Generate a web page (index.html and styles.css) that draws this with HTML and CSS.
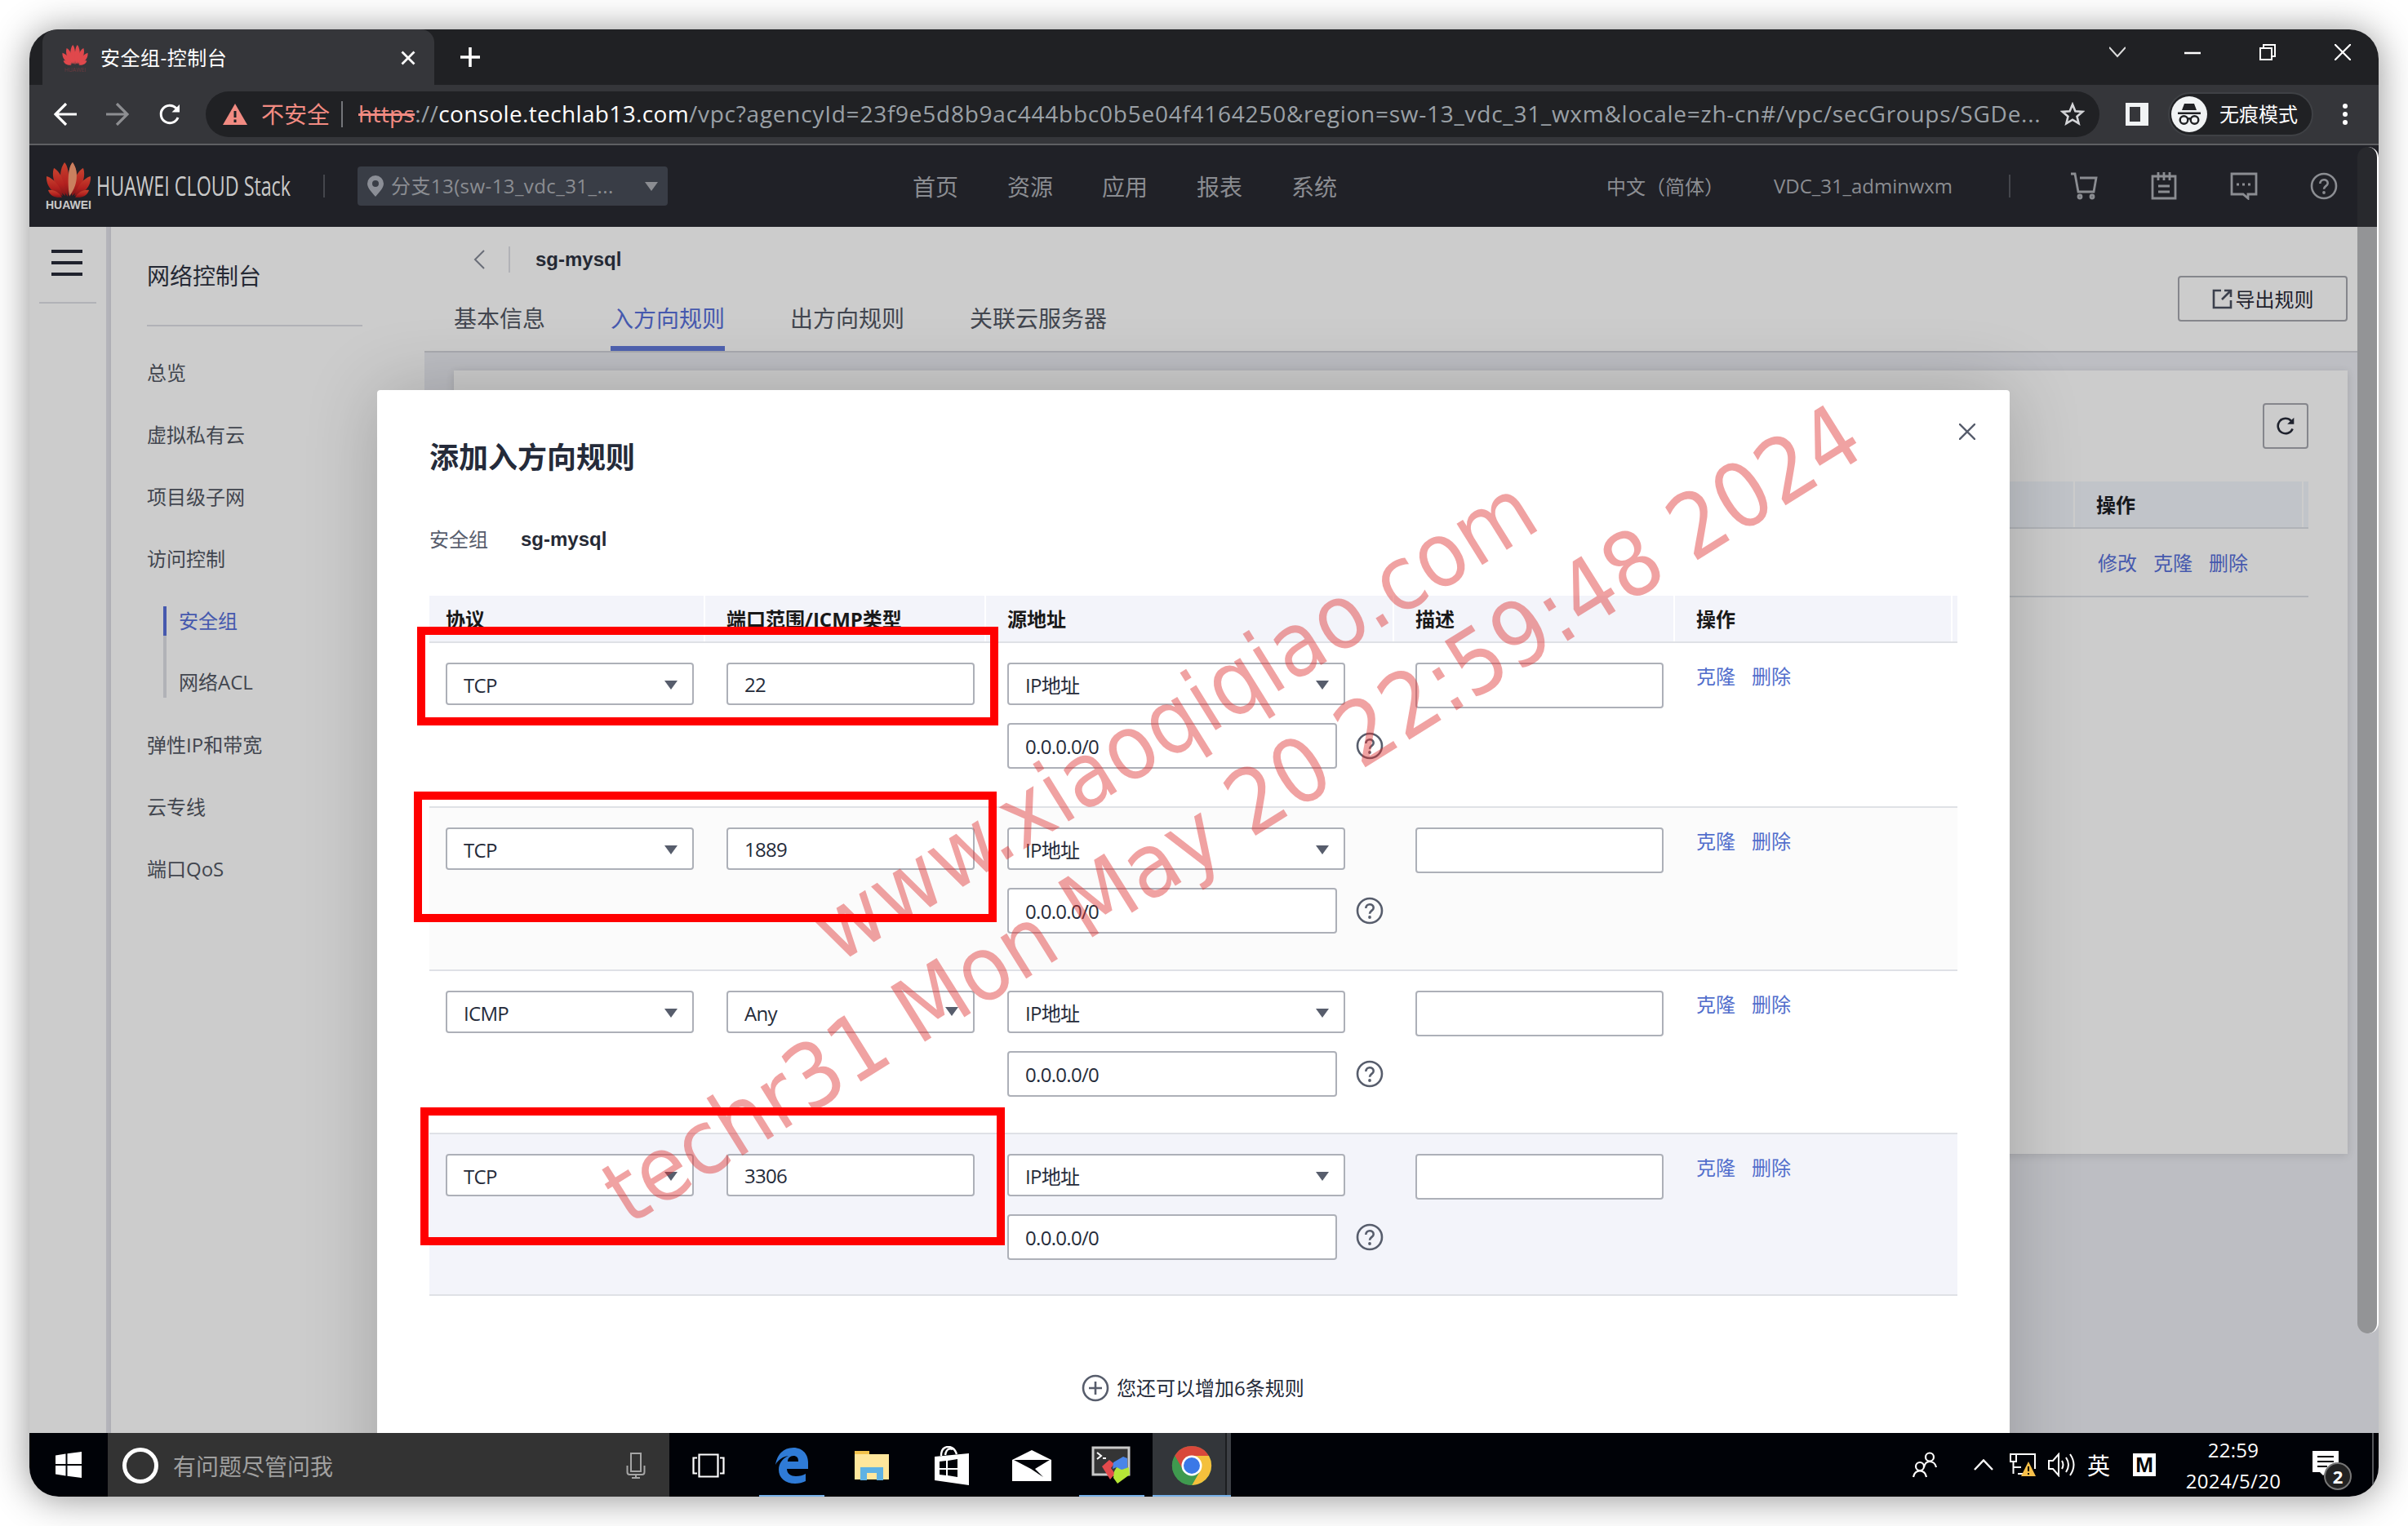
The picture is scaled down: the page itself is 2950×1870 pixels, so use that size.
FILE: index.html
```html
<!DOCTYPE html>
<html lang="zh-CN">
<head>
<meta charset="utf-8">
<title>安全组-控制台</title>
<link rel="stylesheet" href="styles.css">
</head>
<body>
<svg class="defs" width="0" height="0">
  <symbol id="petals" viewBox="0 0 56 44">
    <path d="M27 43C17 30 15 12 23 1c5 4 7 22 4 42z"/><path d="M29 43C39 30 41 12 33 1c-5 4-7 22-4 42z"/>
    <path d="M24 42C13 34 6 20 10 8c8 4 14 18 14 34z"/><path d="M32 42C43 34 50 20 46 8c-8 4-14 18-14 34z"/>
    <path d="M21 42C10 40 0 31 1 18c8 2 17 12 20 24z"/><path d="M35 42C46 40 56 31 55 18c-8 2-17 12-20 24z"/>
    <path d="M20 44C12 45 5 42 3 35c7-1 14 3 17 9z"/><path d="M36 44C44 45 51 42 53 35c-7-1-14 3-17 9z"/>
  </symbol>
  <symbol id="help" viewBox="0 0 34 34"><g fill="none" stroke="currentColor" stroke-width="2.6"><circle cx="17" cy="17" r="15"/><path d="M12.3 14c0-6.200 9.400-6.200 9.400-.6 0 3.400-4.700 3.600-4.700 7.400"/></g><circle cx="17" cy="25" r="1.900" fill="currentColor"/></symbol>
  <symbol id="reload" viewBox="0 0 28 28"><path d="M24 18A10.800 10.800 0 1 1 21.800 6.500L24 9" fill="none" stroke="currentColor" stroke-width="3"/><path d="M26 2V11.500H16.500z" fill="currentColor"/></symbol>
</svg>
<div class="window">
  <div class="tabstrip">
    <div class="tab">
      <svg class="favicon" viewBox="0 0 56 66"><use href="#petals" width="56" height="52" fill="#e0484c"/><text x="28" y="62" font-size="12" text-anchor="middle" fill="#6b3a40">HUAWEI</text></svg>
      <span>安全组-控制台</span>
      <svg class="tab-x" viewBox="0 0 18 18"><path d="M1.500 1.500l15 15m0-15l-15 15" stroke="#fff" stroke-width="2.800"/></svg>
    </div>
    <svg class="plus" viewBox="0 0 24 24"><path d="M12 0v24M0 12h24" stroke="#fff" stroke-width="3.600"/></svg>
    <div class="winctl">
      <svg viewBox="0 0 20 20"><path d="M0 4l10 11L20 4" fill="none" stroke="#ddd" stroke-width="2"/></svg>
      <svg viewBox="0 0 20 20"><path d="M0 11h20" stroke="#fff" stroke-width="2.400"/></svg>
      <svg viewBox="0 0 20 20"><path d="M1 5h14v14H1zM5 5V1h14v14h-4" fill="none" stroke="#fff" stroke-width="2"/></svg>
      <svg viewBox="0 0 20 20"><path d="M0 0l20 20M20 0L0 20" stroke="#fff" stroke-width="2.200"/></svg>
    </div>
  </div>
  <div class="toolbar">
    <svg class="nav-i" viewBox="0 0 28 28"><path d="M28 14H2M15 1L2 14l13 13" fill="none" stroke="#fff" stroke-width="3.200"/></svg>
    <svg class="nav-i dim" viewBox="0 0 28 28"><path d="M0 14h26M13 1l13 13-13 13" fill="none" stroke="#8d8e91" stroke-width="3.200"/></svg>
    <svg class="nav-i white"><use href="#reload"/></svg>
    <div class="omnibox">
      <svg class="warn" viewBox="0 0 30 26"><path d="M15 0l15 26H0z" fill="#f28b82"/><path d="M15 9v8m0 2.500v3.500" stroke="#202124" stroke-width="3"/></svg>
      <span class="unsafe">不安全</span><i class="osep"></i>
      <span class="url"><span class="scheme">https</span><span class="sl">://</span><b>console.techlab13.com</b><span class="path">/vpc?agencyId=23f9e5d8b9ac444bbc0b5e04f4164250&amp;region=sw-13_vdc_31_wxm&amp;locale=zh-cn#/vpc/secGroups/SGDe...</span></span>
      <svg class="star" viewBox="0 0 30 30"><path d="M15 3l3.400 8.200 8.800.7-6.700 5.800 2.100 8.600L15 21.700l-7.600 4.600 2.100-8.600-6.700-5.800 8.800-.7z" fill="none" stroke="#d5d6d9" stroke-width="2.600"/></svg>
    </div>
    <svg class="panel" viewBox="0 0 28 28"><path d="M2.500 2.500h23v23h-23z" fill="none" stroke="#f1f3f4" stroke-width="5"/><path d="M18 2h8v24h-8z" fill="#f1f3f4"/></svg>
    <div class="incog">
      <svg viewBox="0 0 44 44"><circle cx="22" cy="22" r="22" fill="#f1f3f4"/><path d="M13 17l3-8h12l3 8zM8 19.500h28v2.500H8z" fill="#202124"/><g fill="none" stroke="#202124" stroke-width="2.400"><circle cx="15.500" cy="29" r="4.800"/><circle cx="28.500" cy="29" r="4.800"/><path d="M20 28q2-1.500 4 0"/></g></svg>
      <span>无痕模式</span>
    </div>
    <svg class="dots" viewBox="0 0 6 28"><circle cx="3" cy="4" r="3"/><circle cx="3" cy="14" r="3"/><circle cx="3" cy="24" r="3"/></svg>
  </div>

  <header class="top">
    <svg class="logo" viewBox="0 0 310 70">
      <defs><linearGradient id="lg" x1="0" y1="0" x2="0" y2="1"><stop offset="0" stop-color="#c8432f"/><stop offset=".6" stop-color="#b3211f"/><stop offset="1" stop-color="#7d1518"/></linearGradient></defs>
      <use href="#petals" y="5" width="56" height="44" fill="url(#lg)"/><path d="M29 47C39 35 41 17 33 6c-5 4-7 22-4 41z" fill="#c9805f"/>
      <text x="0" y="63" class="hw" textLength="56" lengthAdjust="spacingAndGlyphs">HUAWEI</text>
      <text x="62" y="47" class="stack" textLength="238" lengthAdjust="spacingAndGlyphs">HUAWEI CLOUD Stack</text>
    </svg>
    <i class="hsep"></i>
    <div class="region"><svg viewBox="0 0 20 26"><path d="M10 0a10 10 0 0 1 10 10c0 6-7 12-10 16C7 22 0 16 0 10A10 10 0 0 1 10 0zm0 6a4 4 0 1 0 0 8 4 4 0 0 0 0-8z" fill="#8b8e96" fill-rule="evenodd"/></svg><span>分支13(sw-13_vdc_31_...</span><i class="tri"></i></div>
    <nav><a>首页</a><a>资源</a><a>应用</a><a>报表</a><a>系统</a></nav>
    <span class="lang">中文（简体）</span><span class="user">VDC_31_adminwxm</span>
    <i class="hsep h2"></i>
    <div class="hicons">
      <svg viewBox="0 0 34 34"><path d="M1 2h5l4 22h19l3-17H12" /><circle cx="12" cy="30" r="2"/><circle cx="27" cy="30" r="2"/></svg>
      <svg viewBox="0 0 34 34"><path d="M3 5h28v27H3zM10 0v10M17 0v10M24 0v10M10 17h14M10 24h14"/></svg>
      <svg viewBox="0 0 34 34"><path d="M2 2h30v25H22v5l-6-5H2z"/><path d="M8 15h3m4 0h3m4 0h3" stroke-width="3.200"/></svg>
      <svg viewBox="0 0 34 34"><use href="#help"/></svg>
    </div>
  </header>

  <div class="page">
    <aside class="rail"><div class="burger"><i></i><i></i><i></i></div><hr></aside>
    <aside class="side">
      <h2>网络控制台</h2><hr>
      <a>总览</a><a>虚拟私有云</a><a>项目级子网</a><a>访问控制</a>
      <div class="sub"><a class="on">安全组</a><a class="acl">网络ACL</a></div>
      <a>弹性IP和带宽</a><a>云专线</a><a>端口QoS</a>
    </aside>
    <main>
      <div class="mhead">
        <div class="mtitle">
          <div class="crumb"><svg viewBox="0 0 14 24"><path d="M13 1L2 12l11 11" fill="none" stroke="#6a6e78" stroke-width="2"/></svg><i></i><b>sg-mysql</b></div>
          <div class="tabs"><a>基本信息</a><a class="on">入方向规则</a><a>出方向规则</a><a>关联云服务器</a></div>
        </div>
        <button class="export"><svg viewBox="0 0 26 26"><path d="M11 2H2v21h21v-9M15 2h8v8M23 2L12 13" fill="none" stroke="#3b404d" stroke-width="2.600"/></svg>导出规则</button>
      </div>
      <div class="card">
        <button class="refresh"><svg><use href="#reload"/></svg></button>
        <div class="brow bhead"><span class="c1"></span><span class="c2">操作</span><span class="c3"></span></div>
        <div class="brow"><span class="c1"></span><span class="acts"><a>修改</a><a>克隆</a><a>删除</a></span></div>
      </div>
    </main>
    <section class="dialog">
      <div class="dhead"><h1>添加入方向规则</h1><svg viewBox="0 0 20 20"><path d="M0 0l20 20M20 0L0 20" stroke="#575d6c" stroke-width="2.400"/></svg></div>
      <div class="sg"><span>安全组</span><b>sg-mysql</b></div>
      <div class="grid">
        <div class="row th"><span>协议</span><span>端口范围/ICMP类型</span><span>源地址</span><span>描述</span><span>操作</span><span></span></div>
        <div class="row tr first"><div class="sel">TCP<i class="tri"></i></div><div class="inp">22</div><div class="src"><div class="sel">IP地址<i class="tri"></i></div><div class="ip"><div class="inp">0.0.0.0/0</div><svg><use href="#help"/></svg></div></div><div class="inp tall"></div><div class="acts"><a>克隆</a><a>删除</a></div></div>
        <div class="row tr alt"><div class="sel">TCP<i class="tri"></i></div><div class="inp">1889</div><div class="src"><div class="sel">IP地址<i class="tri"></i></div><div class="ip"><div class="inp">0.0.0.0/0</div><svg><use href="#help"/></svg></div></div><div class="inp tall"></div><div class="acts"><a>克隆</a><a>删除</a></div></div>
        <div class="row tr"><div class="sel">ICMP<i class="tri"></i></div><div class="sel any">Any<i class="tri"></i></div><div class="src"><div class="sel">IP地址<i class="tri"></i></div><div class="ip"><div class="inp">0.0.0.0/0</div><svg><use href="#help"/></svg></div></div><div class="inp tall"></div><div class="acts"><a>克隆</a><a>删除</a></div></div>
        <div class="row tr hover"><div class="sel">TCP<i class="tri"></i></div><div class="inp">3306</div><div class="src"><div class="sel">IP地址<i class="tri"></i></div><div class="ip"><div class="inp">0.0.0.0/0</div><svg><use href="#help"/></svg></div></div><div class="inp tall"></div><div class="acts"><a>克隆</a><a>删除</a></div></div>
      </div>
      <div class="add"><svg viewBox="0 0 34 34"><g fill="none" stroke="#575d6c" stroke-width="2.600"><circle cx="17" cy="17" r="15"/><path d="M17 9v16M9 17h16"/></g></svg><span>您还可以增加6条规则</span></div>
    </section>
  </div>

  <footer class="taskbar">
    <div class="start"><svg viewBox="0 0 32 32"><path d="M0 4.500L12.500 2.500V15H0zM14.500 2.200L32 0v15H14.500zM0 17h12.500v12.500L0 27.500zM14.500 17H32v15l-17.500-2.200z" fill="#fff"/></svg></div>
    <div class="search"><i class="cortana"></i><span>有问题尽管问我</span><svg viewBox="0 0 24 32"><path d="M6 1h12v22H6zM1.500 16v8q0 3 3 3h15q3 0 3-3v-8M12 27v4M7 31h10" fill="none" stroke="#a5a5a5" stroke-width="2"/></svg></div>
    <div class="slot tv"><svg width="40" height="30" viewBox="0 0 40 30"><path d="M8.500 1.500h23v27h-23zM6 5.500H1.500v19H6M34 5.500h4.500v19H34" fill="none" stroke="#fff" stroke-width="2.200"/></svg></div>
    <div class="slot run"><svg width="42" height="44" viewBox="0 0 42 44"><path d="M1 21C3 8 11 0 23 0c11 0 18 8 18 18v8H15c0 6 5 9 11 9 5 0 9-1 12-3v9c-4 2-8 3-13 3C13 44 5 37 5 27c0-8 5-14 12-17C10 11 4 15 1 21zm15-4h13c0-5-2-7-6-7s-7 3-7 7z" fill="#2f7bd6"/></svg></div>
    <div class="slot"><svg width="44" height="38" viewBox="0 0 44 38"><path d="M1 1h18v4h24v31H1z" fill="#ffe79c"/><path d="M1 1h18v4H1z" fill="#f3c34c"/><path d="M8 37V21h28v16h-8v-9H16v9z" fill="#5eb2e4"/></svg></div>
    <div class="slot"><svg width="42" height="48" viewBox="0 0 42 48"><path d="M0 13l42-4v39L0 42z" fill="#fff"/><path d="M8 12C8 4 12 1 17 1s8 3 10 9M13 11c1-7 5-9 9-7" fill="none" stroke="#fff" stroke-width="2.400"/><path d="M6 19l8-1v9H6zm10-1l12-2v11H16zM6 29h8v7l-8-1zm10 0h12v9l-12-2z" fill="#000207"/></svg></div>
    <div class="slot"><svg width="48" height="38" viewBox="0 0 48 38"><path d="M0 12L24 0l24 12v26H0z" fill="#fff"/><path d="M2 12h44L28 23l10 10-15-10z" fill="#000207"/></svg></div>
    <div class="slot run"><svg width="50" height="48" viewBox="0 0 50 48"><path d="M2 2h44v33H2z" fill="#353535" stroke="#c9c9c9" stroke-width="3"/><path d="M7 8l5 4-5 4M14 15h4" fill="none" stroke="#fff" stroke-width="2"/><path d="M13 25l9-8 6 5-4 5 5 7-6 7z" fill="#e44a4c"/><path d="M27 20l12-7 5 2v12l-9 3-4-4-5 2z" fill="#4a85e8"/><path d="M28 31l3-5 6 3 9-3 1 9-15 11-5-7z" fill="#b5e636"/></svg></div>
    <div class="slot chrome"><svg width="50" height="50" viewBox="0 0 50 50"><circle cx="25" cy="25" r="24" fill="#3f9a4f"/><path d="M25 13h21A24 24 0 0 1 25 49l10.400-18z" fill="#f4c03c"/><path d="M4.200 13a24 24 0 0 1 41.600 0H25a12 12 0 0 0-10.400 18z" fill="#d9483b"/><path d="M4.200 13A24 24 0 0 0 25 49l10.400-18a12 12 0 0 1-20.800 0z" fill="#3f9a4f"/><circle cx="25" cy="25" r="12.500" fill="#fff"/><circle cx="25" cy="25" r="10" fill="#3b78e7"/></svg></div>
    <div class="tray">
      <svg width="30" height="32" viewBox="0 0 30 32"><g fill="none" stroke="#fff" stroke-width="2.200"><circle cx="21" cy="6.500" r="5"/><path d="M14 19c1-5 4-7 7-7s7 2 8 7"/><circle cx="9" cy="18" r="5"/><path d="M1 31c1-5 4-7.500 8-7.500s7 2.500 8 7.500"/></g></svg>
      <svg class="up" width="24" height="14" viewBox="0 0 24 14"><path d="M1 13L12 1.500 23 13" fill="none" stroke="#fff" stroke-width="2.400"/></svg>
      <svg class="net" width="32" height="30" viewBox="0 0 32 30"><path d="M9 2h22v18M1 2h7v9H1zM4.500 11v15M4 18h10M10 26h8" fill="none" stroke="#fff" stroke-width="2"/><path d="M23 11l9 18H14z" fill="#f7c04a"/><path d="M23 17v6m0 2v2" stroke="#000" stroke-width="2"/></svg>
      <svg class="vol" width="34" height="30" viewBox="0 0 34 30"><path d="M1 10h5l7-8v26l-7-8H1zM17 10q3 5 0 10M22 6q6 9 0 18M27 2q9 13 0 26" fill="none" stroke="#fff" stroke-width="2"/></svg>
      <span class="ime">英</span><span class="m">M</span>
      <div class="clock"><span>22:59</span><span>2024/5/20</span></div>
      <div class="note"><svg width="32" height="30" viewBox="0 0 32 30"><path d="M0 0h32v26H18l-5 4-4-4H0z" fill="#fff"/><path d="M6 7h20M6 13h20M6 19h12" stroke="#000" stroke-width="2"/></svg><span>2</span></div>
      <i class="desk"></i>
    </div>
  </footer>
  <i class="thumb"></i>
</div>
<svg class="marks" width="2950" height="1870">
  <g class="wm">
    <text transform="translate(1026 1182) rotate(-31.800)" textLength="1017" lengthAdjust="spacingAndGlyphs">www.xiaoqiqiao.com</text>
    <text transform="translate(770 1503) rotate(-31.950)" textLength="1790" lengthAdjust="spacingAndGlyphs">techr31 Mon May 20 22:59:48 2024</text>
  </g>
  <g fill="none" stroke="#f00" stroke-width="10"><rect x="516" y="773" width="702" height="111"/><rect x="512" y="975" width="704" height="150"/><rect x="520" y="1362" width="706" height="159"/></g>
</svg>
</body>
</html>
```
FILE: styles.css
```css
* { box-sizing: border-box; margin: 0; padding: 0; }
body { width: 2950px; height: 1870px; overflow: hidden; background: #fff; padding: 36px; position: relative;
  font-family: "Open Sans", "Noto Sans CJK SC", sans-serif; font-size: 24px; line-height: 36px; color: #252b3a; }
svg { display: block; flex: none; }
i { display: block; flex: none; }
hr { border: 0; height: 2px; background: #b1b2b7; }
.defs { position: absolute; }
.window { position: relative; width: 2878px; height: 1798px; border-radius: 36px; overflow: hidden; display: flex; flex-direction: column; }
body::before { content: ""; position: absolute; left: 36px; top: 36px; width: 2878px; height: 1798px; border-radius: 36px; box-shadow: 0 2px 46px rgba(0,0,0,.44); }

/* browser chrome */
.tabstrip { height: 68px; background: #202124; display: flex; align-items: center; padding-left: 16px; }
.tab { width: 480px; height: 68px; background: #35363a; border-radius: 16px 16px 0 0; display: flex; align-items: center; padding: 2px 23px 0 23px; color: #fff; }
.tab span { margin-left: 14px; flex: 1; letter-spacing: .5px; }
.favicon { width: 34px; height: 38px; }
.tab-x { width: 18px; height: 18px; }
.plus { width: 24px; height: 24px; margin-left: 32px; }
.winctl { margin-left: auto; display: flex; gap: 72px; padding: 0 34px 12px 0; }
.winctl svg { width: 20px; height: 20px; }
.toolbar { height: 74px; background: #35363a; border-bottom: 2px solid #5f6063; display: flex; align-items: center; padding-left: 30px; }
.nav-i { width: 28px; height: 28px; margin-right: 36px; }
.white { color: #fff; margin-right: 30px; }
.omnibox { width: 2320px; height: 56px; border-radius: 28px; background: #202124; display: flex; align-items: center; padding-left: 21px; font-size: 28px; line-height: 54px; color: #9aa0a6; white-space: nowrap; }
.warn { width: 30px; height: 26px; }
.unsafe { color: #f28b82; margin-left: 17px; }
.osep { width: 2px; height: 32px; background: #74767a; margin: 0 19px 0 14px; }
.url { width: 2060px; height: 56px; display: flex; }
.scheme { color: #f28b82; text-decoration: line-through; text-decoration-thickness: 3px; letter-spacing: .3px; }
.sl { letter-spacing: .4px; }
.url b { color: #fff; font-weight: 400; letter-spacing: .35px; }
.path { letter-spacing: .75px; }
.star { width: 30px; height: 30px; margin-left: 25px; }
.panel { width: 28px; height: 28px; margin-left: 32px; }
.incog { width: 178px; height: 54px; margin-left: 24px; border: 2px solid #3f4145; border-radius: 27px; background: #202124; display: flex; align-items: center; gap: 15px; color: #fff; padding-left: 2px; }
.incog svg { width: 44px; height: 44px; }
.dots { width: 6px; height: 28px; margin-left: 36px; fill: #fff; }

/* console header */
.top { height: 100px; background: #202127; display: flex; align-items: center; color: #8b8d92; padding-left: 20px; white-space: nowrap; }
.logo { width: 310px; height: 70px; margin-right: -10px; overflow: visible; }
.hw { font: 700 15px "Liberation Sans", sans-serif; fill: #c9c9c9; }
.stack { font-size: 32px; fill: #c9c9c9; }
.hsep { width: 2px; height: 28px; background: #44464c; margin: 0 40px 0 40px; }
.region { width: 380px; height: 48px; background: #393d46; border-radius: 4px; display: flex; align-items: center; padding: 0 12px 0 12px; letter-spacing: .42px; }
.region svg { width: 20px; height: 26px; margin-right: 9px; }
.region span { flex: 1; padding-bottom: 1px; }
.tri { border: 7px solid transparent; border-top: 11px solid currentColor; border-bottom: 0; border-left-width: 8px; border-right-width: 8px; }
nav { display: flex; gap: 60px; margin-left: 300px; font-size: 28px; padding-top: 2px; }
.lang { margin-left: 330px; width: 144px; padding-top: 1px; }
.user { margin-left: 61px; width: 218px; letter-spacing: -.05px; }
.h2 { margin: 0 0 0 70px; }
.hicons { display: flex; gap: 64px; margin-left: 73px; }
.hicons svg { width: 34px; height: 34px; fill: none; stroke: #8b8d92; stroke-width: 2.800; }
.hicons svg use { stroke: none; color: #8b8d92; }

/* page */
.page { position: relative; height: 1478px; display: flex; background: #ccc; overflow: hidden; }
.rail { width: 100px; border-right: 6px solid #b4b4ba; padding: 28px 12px 0; }
.burger { display: flex; flex-direction: column; gap: 10px; padding: 0 17px 0 15px; height: 64px; }
.burger i { height: 4px; background: #1f222d; }
.side { width: 384px; padding: 40px 76px 0 44px; display: flex; flex-direction: column; color: #42464f; box-shadow: 2px 0 6px rgba(0,0,0,.12); }
.side h2 { font-size: 28px; font-weight: 400; line-height: 40px; color: #252934; margin-bottom: 40px; }
.side hr { margin-bottom: 19px; flex: none; }
.side a { height: 76px; line-height: 76px; white-space: nowrap; }
.sub { margin-left: 20px; height: 152px; padding-top: 20px; }
.sub a { display: flex; align-items: center; height: 36px; line-height: 36px; border-left: 4px solid #4659ae; padding-left: 15px; }
.sub .on { color: #4659ae; }
.sub .acl { height: 76px; padding-top: 38px; border-color: #b1b2b7; }
main { flex: 1; background: #bdbec3; }
.mhead { height: 154px; background: #ccc; border-bottom: 2px solid #a9aaaf; display: flex; justify-content: space-between; padding-right: 38px; }
.crumb { display: flex; align-items: center; height: 80px; padding-left: 60px; }
.crumb svg { width: 14px; height: 24px; }
.crumb i { width: 2px; height: 32px; background: #b1b2b7; margin: 0 31px 0 29px; }
.crumb b, .sg b { font-family: "Liberation Sans", sans-serif; color: #252934; }
.tabs { display: flex; gap: 80px; font-size: 28px; padding-left: 36px; color: #42464f; height: 72px; }
.tabs a { line-height: 64px; }
.tabs .on { color: #4659ae; border-bottom: 6px solid #4f62b0; }
button { font: inherit; background: none; color: #1f222d; border: 2px solid #85868c; border-radius: 4px; display: flex; align-items: center; justify-content: center; }
.export { width: 208px; height: 56px; margin-top: 60px; gap: 3px; padding-top: 2px; }
.export svg { width: 26px; height: 26px; }
.card { width: 2320px; height: 960px; margin: 22px 0 0 36px; background: #ccc; box-shadow: 0 2px 10px rgba(0,0,0,.12); padding: 40px 48px 0; display: flex; flex-direction: column; }
.refresh { width: 56px; height: 56px; align-self: flex-end; margin-bottom: 40px; }
.refresh svg { width: 28px; height: 28px; transform: scale(.86); }
.brow { display: flex; height: 84px; align-items: center; border-bottom: 2px solid #b0b3b8; }
.bhead { height: 58px; background: #c1c4c9; font-weight: 700; color: #15171c; }
.c1 { width: 1938px; height: 100%; border-right: 2px solid #ccc; }
.brow:not(.bhead) .c1 { border: 0; }
.c2 { padding-left: 26px; width: 280px; height: 56px; line-height: 57px; border-right: 2px solid #ccc; }
.brow .acts { padding: 2px 0 0 28px; color: #4659ae; }
.acts { display: flex; gap: 20px; }

/* dialog */
.dialog { position: absolute; left: 426px; top: 200px; width: 2000px; height: 1400px; background: #fff; border-radius: 4px; box-shadow: 0 0 90px rgba(0,0,0,.2); padding: 54px 64px 0; }
.dhead { display: flex; justify-content: space-between; height: 54px; }
.dhead h1 { font-size: 36px; line-height: 57px; }
.dhead svg { width: 20px; height: 20px; margin: -13px -22px 0 0; }
.sg { display: flex; gap: 40px; padding-top: 57px; height: 144px; color: #575d6c; }
.row { display: grid; grid-template-columns: 344px 344px 500px 344px 340px; width: 1872px; }
.th { display: flex; height: 58px; background: #f3f4fa; border-bottom: 2px solid #dfe1e6; font-weight: 700; color: #191919; }
.th span { width: 344px; height: 56px; padding-left: 26px; line-height: 58px; border-right: 2px solid #fff; position: relative; left: -6px; }
.th span:nth-child(3) { width: 500px; }
.th span:nth-child(5) { width: 340px; }
.th span:last-child { width: 0; padding: 0; border: 0; }
.tr { height: 200px; padding: 24px 0 0 20px; border-bottom: 2px solid #dfe1e6; align-items: start; }
.tr.first { height: 202px; }
.tr.alt { background: #fbfbfb; }
.tr.hover { background: #f3f4fa; height: 198px; }
.sel, .inp { width: 304px; height: 52px; background: #fff; border: 2px solid #adb0b8; border-radius: 4px; padding: 2px 20px 0; letter-spacing: -.7px; line-height: 46px; display: flex; align-items: center; justify-content: space-between; }
.sel { padding: 4px 18px 0 20px; }
.sel .tri { color: #575d6c; margin-top: -1px; }
.any .tri { margin-top: -6px; }
.src .sel { width: 414px; }
.tall { height: 56px; }
.src { display: flex; flex-direction: column; gap: 22px; }
.ip { display: flex; align-items: center; gap: 23px; color: #575d6c; }
.ip .inp { width: 404px; height: 56px; color: #252b3a; }
.ip svg { width: 34px; height: 34px; }
.tr .acts { color: #526ecc; margin-top: -1px; }
.add { display: flex; align-items: center; gap: 9px; padding: 95px 0 0 799px; white-space: nowrap; }
.add svg { width: 34px; height: 34px; }

/* taskbar */
.taskbar { height: 78px; background: #000207; display: flex; color: #fff; }
.start { width: 96px; display: flex; align-items: center; justify-content: center; }
.start svg { width: 32px; height: 32px; }
.search { width: 688px; background: #333; display: flex; align-items: center; padding: 2px 29px 0 18px; font-size: 28px; color: #a0a0a0; }
.search span { margin-left: 18px; flex: 1; padding-top: 2px; }
.search svg { width: 24px; height: 32px; }
.cortana { width: 44px; height: 44px; border: 5px solid #fff; border-radius: 50%; }
.slot { width: 98px; display: flex; align-items: center; justify-content: center; position: relative; padding-top: 2px; }
.slot.tv { width: 101px; padding-right: 5px; }
.run::after, .chrome::after { content: ""; position: absolute; left: 9px; bottom: 0; width: 80px; height: 2px; background: #76b0e8; }
.chrome { background: linear-gradient(90deg, #33363a 89px, #1c1e20 89px 91px, #3d4045 91px); width: 96px; margin-left: 1px; }
.chrome::after { left: 0; width: 96px; }
.tray { margin-left: auto; display: flex; align-items: center; }
.up { margin-left: 45px; }
.net { margin-left: 20px; }
.vol { margin-left: 15px; }
.ime { font-size: 28px; margin-left: 14px; padding-top: 2px; }
.m { width: 28px; height: 28px; background: #fff; color: #000; font: 700 26px/28px "Liberation Sans", sans-serif; text-align: center; margin: 0 36px 0 28px; }
.clock { width: 118px; display: flex; flex-direction: column; align-items: center; line-height: 38px; padding-top: 2px; letter-spacing: .3px; }
.note { position: relative; margin-left: 38px; padding-bottom: 4px; }
.note span { position: absolute; left: 14px; top: 14px; width: 34px; height: 34px; border: 2px solid #777; border-radius: 50%; background: #222; font: 700 22px/30px "Open Sans", sans-serif; text-align: center; }
.desk { width: 2px; height: 78px; background: #55575b; margin: 0 6px 0 41px; }

/* overlays */
.thumb { position: absolute; right: 0; top: 144px; width: 26px; height: 1454px; border-radius: 13px; border-right: 2px solid #fff; background: linear-gradient(#28292d 98px, #939496 98px); }
.marks { position: absolute; left: 0; top: 0; }
.wm { font: 109px "DejaVu Sans Condensed", "DejaVu Sans", sans-serif; fill: rgba(221,48,48,.45); }
```
